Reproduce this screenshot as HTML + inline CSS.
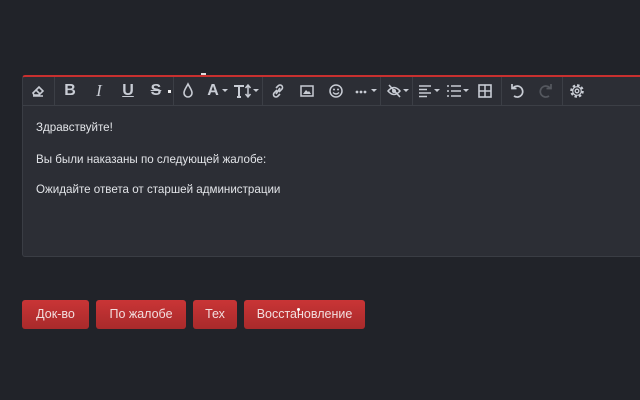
<!DOCTYPE html>
<html><head><meta charset="utf-8"><style>
html,body{margin:0;padding:0;width:640px;height:400px;background:#212329;overflow:hidden;font-family:"Liberation Sans","DejaVu Sans",sans-serif}
.ed{position:absolute;left:22px;top:75px;width:640px;height:182px;background:#2c2e35;border:1px solid #3a3d44;border-top:2px solid #c9302f;border-radius:3px 0 0 3px;box-sizing:border-box}
.tb{position:absolute;left:0;top:0;right:0;height:28px;border-bottom:1px solid #3c3f46}
.sep{position:absolute;top:0;width:1px;height:28px;background:#3c3f46}
.ic{position:absolute;top:4px;height:20px;color:#c8ccd4;font-size:16px;line-height:20px;text-align:center}
.ic svg{display:block}
.car{position:absolute;top:12px;width:0;height:0;border-left:3px solid transparent;border-right:3px solid transparent;border-top:3px solid #c8ccd4}
.txt{position:absolute;left:13px;color:#e2e4e8;font-size:11.6px}
.btn{position:absolute;top:300px;height:29px;background:linear-gradient(#c93536,#a82a2b);border-radius:3px;color:#f2dede;font-size:12.5px;line-height:29px;text-align:center}
</style></head><body>
<div style="position:absolute;left:201px;top:73px;width:5px;height:2px;background:#ddd"></div>
<div class="ed">
<div class="tb">
<div class="sep" style="left:31px"></div><div class="sep" style="left:150px"></div><div class="sep" style="left:239px"></div><div class="sep" style="left:357px"></div><div class="sep" style="left:389px"></div><div class="sep" style="left:478px"></div><div class="sep" style="left:539px"></div>
<div class="ic" style="left:7px;width:16px"><svg width="16" height="20" viewBox="0 0 16 20"><path d="M3 12 L9 6 L13 10 L9 14 H4 Z M6 9 L10 13 M3 15 H13" fill="none" stroke="#c8ccd4" stroke-width="1.6"/></svg></div>
<div class="ic" style="left:40px;width:14px;font-weight:bold">B</div>
<div class="ic" style="left:69px;width:14px;font-style:italic;font-family:'Liberation Serif',serif;font-size:17px">I</div>
<div class="ic" style="left:98px;width:14px;text-decoration:underline;font-weight:bold">U</div>
<div class="ic" style="left:126px;width:14px;text-decoration:line-through;font-weight:bold">S</div>
<div style="position:absolute;left:145px;top:13px;width:3px;height:3px;background:#eee"></div>
<div class="ic" style="left:158px;width:14px"><svg width="14" height="20" viewBox="0 0 14 20"><path d="M7 3 C9 7 11 9 11 12 A4 4 0 0 1 3 12 C3 9 5 7 7 3Z" fill="none" stroke="#c8ccd4" stroke-width="1.6"/></svg></div>
<div class="ic" style="left:183px;width:14px;font-weight:bold">A</div><div class="car" style="left:199px"></div>
<div class="ic" style="left:210px;width:22px"><svg width="22" height="20" viewBox="0 0 22 20"><path d="M1 5 H11 M6 5 V16 M4 16 H8" stroke="#c8ccd4" stroke-width="2" fill="none"/><path d="M15 4 V16 M12.5 7 L15 4 L17.5 7 M12.5 13 L15 16 L17.5 13" stroke="#c8ccd4" stroke-width="1.5" fill="none"/></svg></div><div class="car" style="left:230px"></div>
<div class="ic" style="left:247px;width:16px"><svg width="16" height="20" viewBox="0 0 16 20"><path d="M7 9 L4 12 A2.5 2.5 0 0 0 7.5 15.5 L10 13 M9 11 L12 8 A2.5 2.5 0 0 0 8.5 4.5 L6 7 M6 13 L10 7" fill="none" stroke="#c8ccd4" stroke-width="1.6"/></svg></div>
<div class="ic" style="left:276px;width:16px"><svg width="16" height="20" viewBox="0 0 16 20"><rect x="2" y="5" width="12" height="10" fill="none" stroke="#c8ccd4" stroke-width="1.5"/><path d="M4 13 L7 9 L9 11 L10 10 L12 13Z" fill="#c8ccd4"/></svg></div>
<div class="ic" style="left:305px;width:16px"><svg width="16" height="20" viewBox="0 0 16 20"><circle cx="8" cy="10" r="6" fill="none" stroke="#c8ccd4" stroke-width="1.5"/><circle cx="6" cy="8.5" r="1" fill="#c8ccd4"/><circle cx="10" cy="8.5" r="1" fill="#c8ccd4"/><path d="M5 11.5 Q8 14.5 11 11.5" fill="none" stroke="#c8ccd4" stroke-width="1.3"/></svg></div>
<div class="ic" style="left:331px;width:14px"><svg width="14" height="20" viewBox="0 0 14 20"><circle cx="3" cy="11" r="1.4" fill="#c8ccd4"/><circle cx="7" cy="11" r="1.4" fill="#c8ccd4"/><circle cx="11" cy="11" r="1.4" fill="#c8ccd4"/></svg></div><div class="car" style="left:348px"></div>
<div class="ic" style="left:363px;width:18px"><svg width="18" height="20" viewBox="0 0 18 20"><path d="M2 10 Q8 3 14 10 Q8 17 2 10Z" fill="none" stroke="#c8ccd4" stroke-width="1.5"/><circle cx="8" cy="10" r="2" fill="#c8ccd4"/><path d="M3 4 L14 16" stroke="#c8ccd4" stroke-width="1.6"/></svg></div><div class="car" style="left:380px"></div>
<div class="ic" style="left:395px;width:14px"><svg width="14" height="20" viewBox="0 0 14 20"><path d="M1 5 H13 M1 8.5 H9 M1 12 H13 M1 15.5 H9" stroke="#c8ccd4" stroke-width="1.4"/></svg></div><div class="car" style="left:411px"></div>
<div class="ic" style="left:423px;width:16px"><svg width="16" height="20" viewBox="0 0 16 20"><path d="M1 5 H3 M1 10 H3 M1 15 H3 M5 5 H15 M5 10 H15 M5 15 H15" stroke="#c8ccd4" stroke-width="1.6"/></svg></div><div class="car" style="left:440px"></div>
<div class="ic" style="left:454px;width:16px"><svg width="16" height="20" viewBox="0 0 16 20"><rect x="2" y="4" width="12" height="12" fill="none" stroke="#c8ccd4" stroke-width="1.6"/><path d="M2 10 H14 M8 4 V16" stroke="#c8ccd4" stroke-width="1.5"/></svg></div>
<div class="ic" style="left:486px;width:16px"><svg width="16" height="20" viewBox="0 0 16 20"><path d="M4 7 A5.5 5.5 0 1 1 5 15 M3 3 V7.5 H7.5" fill="none" stroke="#c8ccd4" stroke-width="1.7"/></svg></div>
<div class="ic" style="left:515px;width:16px"><svg width="16" height="20" viewBox="0 0 16 20"><path d="M12 7 A5.5 5.5 0 1 0 11 15 M13 3 V7.5 H8.5" fill="none" stroke="#55585f" stroke-width="1.7"/></svg></div>
<div class="ic" style="left:545px;width:18px"><svg width="18" height="20" viewBox="0 0 18 20"><circle cx="9" cy="10" r="5.5" fill="none" stroke="#c8ccd4" stroke-width="2.6" stroke-dasharray="2.4 1.9"/><circle cx="9" cy="10" r="4.3" fill="none" stroke="#c8ccd4" stroke-width="1.2"/><circle cx="9" cy="10" r="1.8" fill="none" stroke="#c8ccd4" stroke-width="1.3"/></svg></div>
</div>
<div class="txt" style="top:44px">Здравствуйте!</div>
<div class="txt" style="top:76px">Вы были наказаны по следующей жалобе:</div>
<div class="txt" style="top:106px">Ожидайте ответа от старшей администрации</div>
</div>
<div class="btn" style="left:22px;width:67px">Док-во</div>
<div class="btn" style="left:96px;width:90px">По жалобе</div>
<div class="btn" style="left:193px;width:44px">Тех</div>
<div class="btn" style="left:244px;width:121px">Восстановление</div>
<div style="position:absolute;left:297px;top:308px;width:3px;height:3px;border-radius:2px;background:#fff"></div>
</body></html>
